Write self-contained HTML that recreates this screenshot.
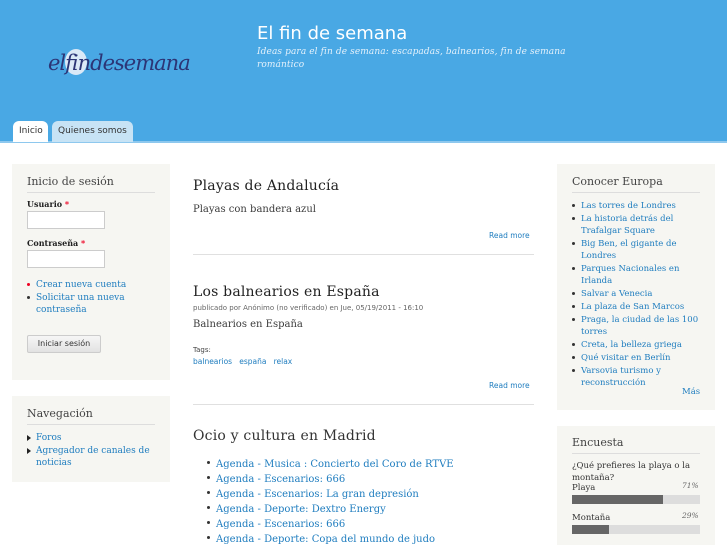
<!DOCTYPE html>
<html><head><meta charset="utf-8"><style>
*{margin:0;padding:0;box-sizing:border-box}
body{width:727px;height:545px;overflow:hidden;background:#fff;font-family:"DejaVu Serif","Liberation Serif",serif;color:#3b3b3b;position:relative}
.a{position:absolute}
a{color:#1f7dbf;text-decoration:none}
#hd{left:0;top:0;width:727px;height:141px;background:#49a8e4}
#line{left:0;top:141px;width:727px;height:2px;background:#8ec8ee}
.tab{top:121px;height:21px;border-radius:6px 6px 0 0;font:9px "DejaVu Sans",sans-serif;line-height:21px;padding:0 6px;color:#333;white-space:nowrap}
.box{background:#f6f6f2}
.bt{font-size:11px;color:#444;padding-bottom:4px;border-bottom:1px solid #ddd}
.lnk{font-size:9px;line-height:12px}
ul.d{list-style:none}
ul.d li{position:relative;padding-left:9px;margin-bottom:1px}
ul.d li:before{content:"";position:absolute;left:0;top:4px;width:3px;height:3px;border-radius:50%;background:#333}
ul.d li.r:before{background:#e02}
ul.t li:before{border-radius:0;width:0;height:0;background:none;border-left:4px solid #222;border-top:3px solid transparent;border-bottom:3px solid transparent;top:3px}
h2{font-weight:normal;font-size:14px;color:#222;letter-spacing:.2px}
.sans{font-family:"DejaVu Sans",sans-serif}
</style></head><body>
<div id="hd" class="a"></div>
<div id="line" class="a"></div>
<svg class="a" style="left:46px;top:45px" width="168" height="34" viewBox="0 0 168 34">
<ellipse cx="30" cy="17" rx="11" ry="13" fill="#dbe9f7"/>
<text x="2" y="25" font-family="DejaVu Serif,serif" font-style="italic" font-size="21" fill="#2c3576" letter-spacing="-1">elfindesemana</text>
</svg>
<div class="a" style="left:257px;top:23px;font:18px 'DejaVu Sans',sans-serif;color:#fff">El fin de semana</div>
<div class="a" style="left:257px;top:46px;width:320px;font-style:italic;font-size:9px;line-height:13px;color:#e4f1fb;letter-spacing:.1px">Ideas para el fin de semana: escapadas, balnearios, fin de semana romántico</div>
<div class="a tab" style="left:13px;width:35px;background:#fff">Inicio</div>
<div class="a tab" style="left:52px;width:81px;background:#c7e3f5">Quienes somos</div>

<div class="a box" style="left:12px;top:164px;width:158px;height:216px"></div>
<div class="a bt" style="left:27px;top:175px;width:128px">Inicio de sesión</div>
<div class="a" style="left:27px;top:199px;font-size:8px;font-weight:bold;color:#222">Usuario <span style="color:#e02">*</span></div>
<div class="a" style="left:27px;top:211px;width:78px;height:18px;background:#fff;border:1px solid #ccc"></div>
<div class="a" style="left:27px;top:238px;font-size:8px;font-weight:bold;color:#222">Contraseña <span style="color:#e02">*</span></div>
<div class="a" style="left:27px;top:250px;width:78px;height:18px;background:#fff;border:1px solid #ccc"></div>
<ul class="a d lnk" style="left:27px;top:279px;width:130px"><li class="r"><a>Crear nueva cuenta</a></li><li><a>Solicitar una nueva contraseña</a></li></ul>
<div class="a sans" style="left:27px;top:335px;width:74px;height:18px;border:1px solid #ccc;border-radius:2px;background:linear-gradient(#f6f6f6,#e2e2e2);font-size:8px;text-align:center;line-height:16px;color:#333">Iniciar sesión</div>

<div class="a box" style="left:12px;top:396px;width:158px;height:86px"></div>
<div class="a bt" style="left:27px;top:407px;width:128px">Navegación</div>
<ul class="a d t lnk" style="left:27px;top:432px;width:130px"><li><a>Foros</a></li><li><a>Agregador de canales de noticias</a></li></ul>

<h2 class="a" style="left:193px;top:178px">Playas de Andalucía</h2>
<div class="a" style="left:193px;top:204px;font-size:10px">Playas con bandera azul</div>
<div class="a sans" style="left:489px;top:231px;font-size:7.5px;color:#1f7dbf">Read more</div>
<div class="a" style="left:193px;top:254px;width:341px;height:1px;background:#e0e0e0"></div>

<h2 class="a" style="left:193px;top:284px">Los balnearios en España</h2>
<div class="a sans" style="left:193px;top:304px;font-size:7px;color:#666">publicado por Anónimo (no verificado) en Jue, 05/19/2011 - 16:10</div>
<div class="a" style="left:193px;top:319px;font-size:10px">Balnearios en España</div>
<div class="a sans" style="left:193px;top:346px;font-size:7px;color:#444">Tags:</div>
<div class="a sans" style="left:193px;top:357px;font-size:7.5px;color:#1f7dbf">balnearios&nbsp;&nbsp; españa&nbsp;&nbsp; relax</div>
<div class="a sans" style="left:489px;top:381px;font-size:7.5px;color:#1f7dbf">Read more</div>
<div class="a" style="left:193px;top:404px;width:341px;height:1px;background:#e0e0e0"></div>

<h2 class="a" style="left:193px;top:428px;color:#333">Ocio y cultura en Madrid</h2>
<ul class="a d" style="left:207px;top:457px;font-size:10px;line-height:15px"><li style="margin:0"><a>Agenda - Musica : Concierto del Coro de RTVE</a></li><li style="margin:0"><a>Agenda - Escenarios: 666</a></li><li style="margin:0"><a>Agenda - Escenarios: La gran depresión</a></li><li style="margin:0"><a>Agenda - Deporte: Dextro Energy</a></li><li style="margin:0"><a>Agenda - Escenarios: 666</a></li><li style="margin:0"><a>Agenda - Deporte: Copa del mundo de judo</a></li></ul>

<div class="a box" style="left:557px;top:164px;width:158px;height:246px"></div>
<div class="a bt" style="left:572px;top:175px;width:128px">Conocer Europa</div>
<ul class="a d lnk" style="left:572px;top:200px;width:132px;font-size:8.5px"><li><a>Las torres de Londres</a></li><li><a>La historia detrás del Trafalgar Square</a></li><li><a>Big Ben, el gigante de Londres</a></li><li><a>Parques Nacionales en Irlanda</a></li><li><a>Salvar a Venecia</a></li><li><a>La plaza de San Marcos</a></li><li><a>Praga, la ciudad de las 100 torres</a></li><li><a>Creta, la belleza griega</a></li><li><a>Qué visitar en Berlín</a></li><li><a>Varsovia turismo y reconstrucción</a></li></ul>
<div class="a lnk" style="left:682px;top:386px;font-size:8.5px"><a>Más</a></div>

<div class="a box" style="left:557px;top:426px;width:158px;height:119px"></div>
<div class="a bt" style="left:572px;top:436px;width:128px">Encuesta</div>
<div class="a" style="left:572px;top:460px;width:130px;font-size:8.5px;line-height:12px;color:#333">¿Qué prefieres la playa o la montaña?</div>
<div class="a" style="left:572px;top:483px;font-size:8.5px;color:#333">Playa</div>
<div class="a" style="left:682px;top:481px;font-size:7.5px;font-style:italic;color:#666">71%</div>
<div class="a" style="left:572px;top:495px;width:128px;height:9px;background:#ddd"><div style="width:91px;height:9px;background:#666"></div></div>
<div class="a" style="left:572px;top:513px;font-size:8.5px;color:#333">Montaña</div>
<div class="a" style="left:682px;top:511px;font-size:7.5px;font-style:italic;color:#666">29%</div>
<div class="a" style="left:572px;top:525px;width:128px;height:9px;background:#ddd"><div style="width:37px;height:9px;background:#666"></div></div>
</body></html>
